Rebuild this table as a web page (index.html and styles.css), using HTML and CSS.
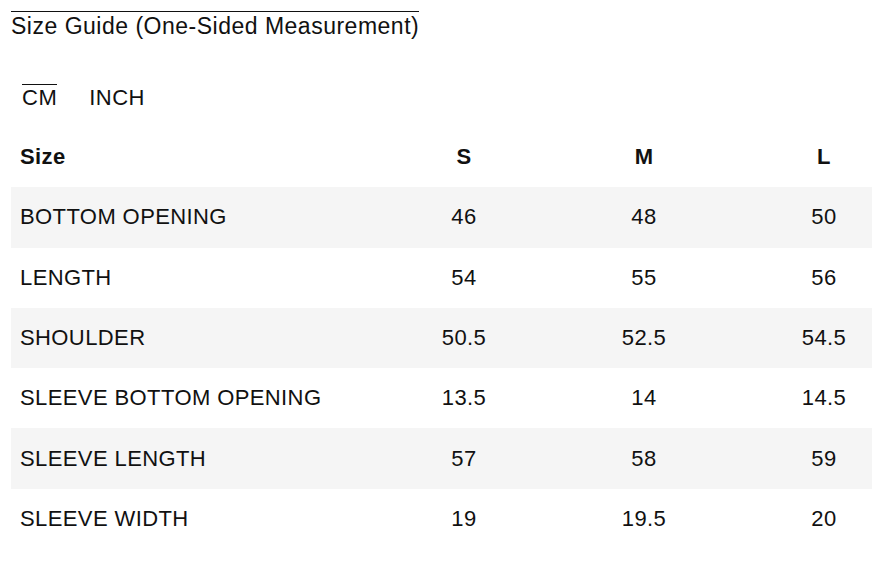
FILE: index.html
```html
<!DOCTYPE html>
<html lang="en">
<head>
<meta charset="utf-8">
<title>Size Guide</title>
<link rel="stylesheet" href="styles.css">
</head>
<body>
<div class="page">
  <h2 class="title">Size Guide (One-Sided Measurement)</h2>
  <div class="tabs">
    <span class="tab active">CM</span>
    <span class="tab">INCH</span>
  </div>
  <table class="size-table">
    <colgroup>
      <col class="col-name">
      <col class="col-val">
      <col class="col-val">
      <col class="col-val">
    </colgroup>
    <thead>
      <tr><th class="name">Size</th><th>S</th><th>M</th><th>L</th></tr>
    </thead>
    <tbody>
      <tr class="alt"><td class="name">BOTTOM OPENING</td><td>46</td><td>48</td><td>50</td></tr>
      <tr><td class="name">LENGTH</td><td>54</td><td>55</td><td>56</td></tr>
      <tr class="alt"><td class="name">SHOULDER</td><td>50.5</td><td>52.5</td><td>54.5</td></tr>
      <tr><td class="name">SLEEVE BOTTOM OPENING</td><td>13.5</td><td>14</td><td>14.5</td></tr>
      <tr class="alt"><td class="name">SLEEVE LENGTH</td><td>57</td><td>58</td><td>59</td></tr>
      <tr><td class="name">SLEEVE WIDTH</td><td>19</td><td>19.5</td><td>20</td></tr>
    </tbody>
  </table>
</div>
</body>
</html>
```
FILE: styles.css
```css
html, body {
  margin: 0;
  padding: 0;
  background: #fff;
  overflow: hidden;
}
body {
  font-family: "Liberation Sans", Arial, Helvetica, sans-serif;
  color: #111;
}
.page {
  padding: 11px 0 0 11px;
}
.title {
  display: inline-block;
  margin: 0;
  padding-top: 2px;
  border-top: 1px solid #111;
  font-size: 23px;
  font-weight: normal;
  letter-spacing: 0.5px;
  line-height: 25px;
}
.tabs {
  display: flex;
  gap: 32px;
  padding: 45px 0 0 11px;
}
.tab {
  font-size: 22px;
  letter-spacing: 0.5px;
  line-height: 25px;
  border-top: 1px solid transparent;
  height: 25px;
}
.tab.active {
  border-top-color: #111;
}
.size-table {
  border-collapse: collapse;
  width: 903px;
  table-layout: fixed;
  margin-top: 17px;
}
.col-name { width: 363px; }
.col-val { width: 180px; }
.size-table th,
.size-table td {
  height: 60.3px;
  padding: 0;
  text-align: center;
  vertical-align: middle;
  font-size: 22px;
  letter-spacing: 0.4px;
  white-space: nowrap;
}
.size-table th {
  font-weight: bold;
}
.size-table .name {
  text-align: left;
  padding-left: 9px;
}
.size-table tr.alt {
  background: #f5f5f5;
}
```
